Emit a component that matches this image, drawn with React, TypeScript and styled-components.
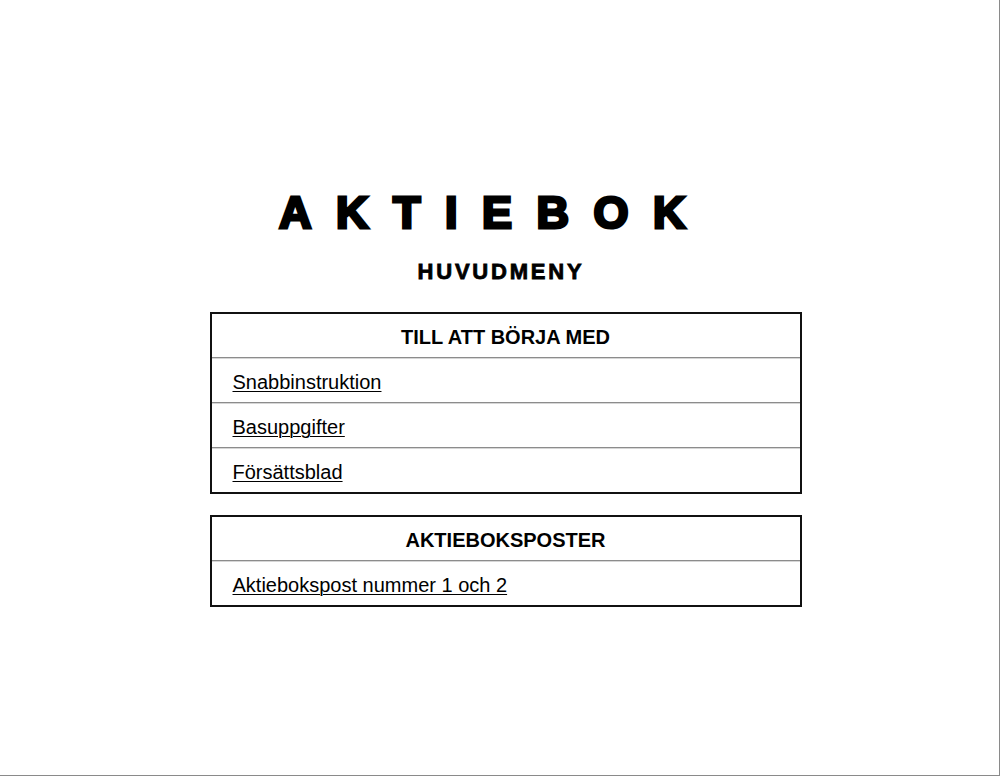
import * as React from 'react';
import styled, { createGlobalStyle } from 'styled-components';

const GlobalStyle = createGlobalStyle`
    html, body {
        margin: 0;
        padding: 0;
        background: #ffffff;
    }

    body {
        font-family: "Liberation Sans", Arial, sans-serif;
        color: #000000;
    }
`;

const Page = styled.div`
    box-sizing: border-box;
    width: 1000px;
    height: 776px;
    border-right: 1px solid #8a8a8a;
    border-bottom: 1px solid #8a8a8a;
    display: flex;
    flex-direction: column;
    align-items: center;
    padding-top: 190px;
`;

const Title = styled.h1`
    margin: 0 10px 0 0;
    font-size: 45px;
    line-height: 1;
    font-weight: 700;
    letter-spacing: 24.5px;
    -webkit-text-stroke: 3px #000;
`;

const Subtitle = styled.h2`
    margin: 26px 0 0 3px;
    font-size: 22px;
    line-height: 1;
    font-weight: 700;
    letter-spacing: 2.8px;
    -webkit-text-stroke: 0.8px #000;
`;

const Menu = styled.div`
    display: flex;
    flex-direction: column;
    gap: 21px;
    margin: 29px 0 0 12px;
`;

const Panel = styled.section`
    box-sizing: border-box;
    width: 592px;
    border: 2px solid #111111;
    display: flex;
    flex-direction: column;
`;

interface RowProps {
    head?: boolean;
}

const Row = styled.div<RowProps>`
    box-sizing: border-box;
    height: 43px;
    display: flex;
    align-items: center;
    justify-content: ${p => (p.head ? 'center' : 'flex-start')};
    padding: 3px 21px 0;
    font-size: 20px;
    font-weight: ${p => (p.head ? 700 : 400)};

    & + & {
        border-top: 1px solid #8c8c8c;
        box-shadow: inset 0 1px 0 #d6d6d6;
        height: 45px;
        padding-top: 5px;
    }
`;

const MenuLink = styled.a`
    color: #000000;
    text-decoration: underline;
    text-underline-offset: 2px;
    text-decoration-thickness: 1px;
`;

type Section = {
    heading: string;
    links: string[];
};

const sections: Section[] = [
    {
        heading: 'TILL ATT BÖRJA MED',
        links: ['Snabbinstruktion', 'Basuppgifter', 'Försättsblad'],
    },
    {
        heading: 'AKTIEBOKSPOSTER',
        links: ['Aktiebokspost nummer 1 och 2'],
    },
];

const App: React.FC = () => {
    return (
        <>
            <GlobalStyle />
            <Page>
                <Title>AKTIEBOK</Title>
                <Subtitle>HUVUDMENY</Subtitle>

                <Menu>
                    {sections.map(section => (
                        <Panel key={section.heading}>
                            <Row head>{section.heading}</Row>
                            {section.links.map(link => (
                                <Row key={link}>
                                    <MenuLink href="#">{link}</MenuLink>
                                </Row>
                            ))}
                        </Panel>
                    ))}
                </Menu>
            </Page>
        </>
    );
};

export default App;
